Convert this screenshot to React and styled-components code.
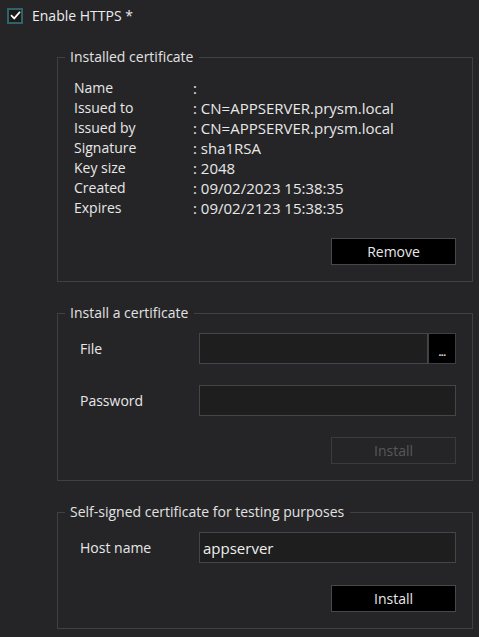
import styled, { createGlobalStyle } from "styled-components";

const GlobalStyle = createGlobalStyle`
    html, body {
        margin: 0;
        padding: 0;
        background: #252527;
    }

    body {
        font-family: "Open Sans", "Noto Sans", sans-serif;
        font-size: 14px;
        color: #e6e6e6;
    }
`

const certificate = [
    ["Name", ""],
    ["Issued to", "CN=APPSERVER.prysm.local"],
    ["Issued by", "CN=APPSERVER.prysm.local"],
    ["Signature", "sha1RSA"],
    ["Key size", "2048"],
    ["Created", "09/02/2023 15:38:35"],
    ["Expires", "09/02/2123 15:38:35"],
];

const CheckIcon = () => (
    <svg width="11" height="11" viewBox="0 0 12 12">
        <path d="M1.8 6.3 L4.6 9.2 L10.3 2.6" fill="none" stroke="#ffffff" strokeWidth="1.9" strokeLinecap="square" />
    </svg>
)

const App = () => {

    return (
        <>
            <GlobalStyle />
            <StyledPage>
                <StyledCheckRow>
                    <StyledCheckBox><CheckIcon /></StyledCheckBox>
                    <span>Enable HTTPS *</span>
                </StyledCheckRow>

                <StyledFrames>
                    <StyledFrame>
                        <StyledLegend>Installed certificate</StyledLegend>
                        <StyledInfo>
                            {certificate.map(([label, value]) => (
                                <StyledInfoRow key={label}>
                                    <span>{label}</span>
                                    <StyledValue>: {value}</StyledValue>
                                </StyledInfoRow>
                            ))}
                        </StyledInfo>
                        <StyledActions $gap={20}>
                            <StyledButton>Remove</StyledButton>
                        </StyledActions>
                    </StyledFrame>

                    <StyledFrame>
                        <StyledLegend>Install a certificate</StyledLegend>
                        <StyledForm>
                            <StyledField>
                                <StyledLabel>File</StyledLabel>
                                <StyledFileGroup>
                                    <StyledInput type="text" />
                                    <StyledBrowse>...</StyledBrowse>
                                </StyledFileGroup>
                            </StyledField>
                            <StyledField>
                                <StyledLabel>Password</StyledLabel>
                                <StyledInput type="password" />
                            </StyledField>
                        </StyledForm>
                        <StyledActions $gap={21}>
                            <StyledButton disabled>Install</StyledButton>
                        </StyledActions>
                    </StyledFrame>

                    <StyledFrame>
                        <StyledLegend>Self-signed certificate for testing purposes</StyledLegend>
                        <StyledForm>
                            <StyledField>
                                <StyledLabel>Host name</StyledLabel>
                                <StyledInput type="text" defaultValue="appserver" />
                            </StyledField>
                        </StyledForm>
                        <StyledActions $gap={22}>
                            <StyledButton>Install</StyledButton>
                        </StyledActions>
                    </StyledFrame>
                </StyledFrames>
            </StyledPage>
        </>
    )
}

export default App;

const StyledPage = styled.div`
    width: 479px;
    height: 637px;
    padding-top: 6px;
    box-sizing: border-box;
`

const StyledCheckRow = styled.label`
    display: flex;
    align-items: center;
    gap: 9px;
    padding-left: 7px;
    height: 19px;
    font-size: 14px;
    color: #ececec;
`

const StyledCheckBox = styled.span`
    display: flex;
    align-items: center;
    justify-content: center;
    width: 12px;
    height: 12px;
    border: 2px solid #2f6466;
    background: #1b1b1c;
`

const StyledFrames = styled.div`
    display: flex;
    flex-direction: column;
    gap: 21px;
    margin: 22px 0 0 57px;
    width: 416px;
`

const StyledFrame = styled.fieldset`
    margin: 0;
    padding: 0 16px 16px 16px;
    border: 1px solid #404042;
    min-width: 0;
`

const StyledLegend = styled.legend`
    margin-left: -9px;
    padding: 0 6px 0 5px;
    line-height: 20px;
    font-size: 14px;
    color: #e2e2e2;
`

const StyledInfo = styled.div`
    padding-top: 11px;
    display: flex;
    flex-direction: column;
`

const StyledInfoRow = styled.div`
    display: grid;
    grid-template-columns: 119px 1fr;
    height: 20px;
    line-height: 20px;
    color: #e8e8e8;
`

const StyledValue = styled.span`
    font-size: 15px;
`

const StyledForm = styled.div`
    display: flex;
    flex-direction: column;
    gap: 21px;
    padding: 10px 0 0 6px;
`

const StyledField = styled.div`
    display: grid;
    grid-template-columns: 119px 1fr;
    align-items: center;
`

const StyledLabel = styled.span`
    color: #e8e8e8;
`

const StyledFileGroup = styled.div`
    display: flex;
`

const StyledInput = styled.input`
    flex: 1;
    min-width: 0;
    height: 31px;
    box-sizing: border-box;
    border: 1px solid #454547;
    background: #1e1e1f;
    color: #eeeeee;
    font-family: inherit;
    font-size: 15px;
    padding: 0 3px;
    outline: none;
`

const StyledBrowse = styled.button`
    width: 28px;
    height: 31px;
    box-sizing: border-box;
    border: 1px solid #3f3f41;
    background: #000000;
    color: #e0e0e0;
    font-family: inherit;
    font-size: 10px;
    font-weight: bold;
    letter-spacing: -0.5px;
    padding: 6px 0 0;
`

const StyledActions = styled.div`
    display: flex;
    justify-content: flex-end;
    margin-top: ${props => props.$gap}px;
`

const StyledButton = styled.button`
    width: 125px;
    height: 27px;
    box-sizing: border-box;
    border: 1px solid #48484a;
    background: #000000;
    color: #e8e8e8;
    font-family: inherit;
    font-size: 14px;
    padding: 0;

    &:disabled {
        background: transparent;
        border-color: #3b3b3d;
        color: #575759;
    }
`
